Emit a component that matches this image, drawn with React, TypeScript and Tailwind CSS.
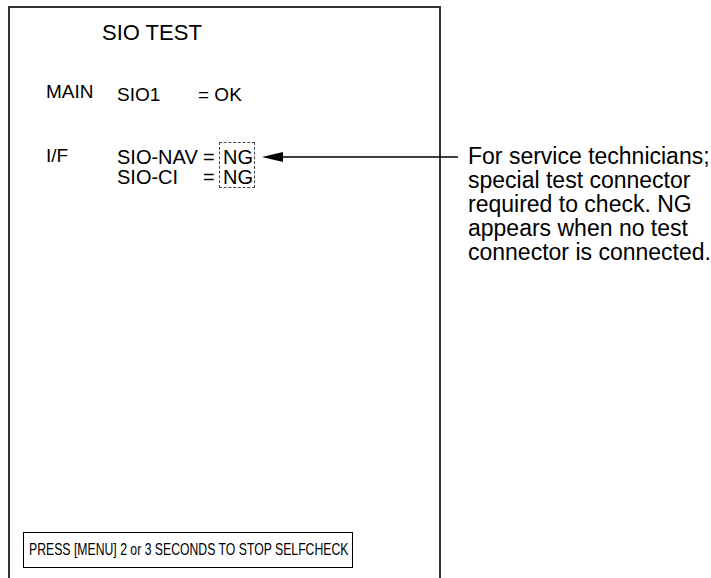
import React from 'react';

// SIO TEST self-check screen with callout note
const App = () => {
  return (
    <div className="relative w-[711px] h-[578px] overflow-hidden bg-white text-black font-['Liberation_Sans',Arial,sans-serif] flex items-start">
      {/* Screen panel */}
      <div className="ml-[8px] mt-[6px] w-[433px] h-[580px] shrink-0 border-2 border-b-0 border-[#333] flex flex-col">
        <div className="mt-[14px] pl-[92px] text-[22px] leading-none">SIO TEST</div>

        <div className="mt-[38px] flex items-start text-[19px] leading-none pl-[36px]">
          <div className="w-[71px]">MAIN</div>
          <div className="mt-[3px] w-[81px]">SIO1</div>
          <div className="mt-[3px]">= OK</div>
        </div>

        <div className="mt-[38px] flex items-start text-[19px] leading-none pl-[36px]">
          <div className="mt-[4px] w-[71px]">I/F</div>
          <div className="flex items-start">
            <div className="flex flex-col gap-[1px] pt-[5px] w-[86px] text-[20px]">
              <div className="h-[19px]">SIO-NAV</div>
              <div className="h-[19px]">SIO-CI</div>
            </div>
            <div className="flex flex-col gap-[1px] pt-[5px] w-[16px] text-[20px]">
              <div className="h-[19px]">=</div>
              <div className="h-[19px]">=</div>
            </div>
            <div className="w-[36px] h-[46px] border border-dashed border-[#444] flex flex-col gap-[1px] pt-[4px] pl-[3px] text-[20px]">
              <div className="h-[19px]">NG</div>
              <div className="h-[19px]">NG</div>
            </div>
          </div>
        </div>

        <div className="mt-auto mb-[18px] ml-[13px] w-[330px] h-[36px] border border-black flex items-center pl-[5px] overflow-hidden">
          <span className="inline-block origin-left scale-x-[0.72] whitespace-nowrap text-[17px] font-['Liberation_Sans',Arial,sans-serif]">
            PRESS [MENU] 2 or 3 SECONDS TO STOP SELFCHECK
          </span>
        </div>
      </div>

      {/* Callout note */}
      <div className="ml-[27px] mt-[144px] text-[23px] leading-[24px]">
        <div>For service technicians;</div>
        <div>special test connector</div>
        <div>required to check. NG</div>
        <div>appears when no test</div>
        <div>connector is connected.</div>
      </div>

      {/* Arrow pointing at the NG box */}
      <svg className="absolute left-[262px] top-[150px]" width="198" height="14" viewBox="0 0 198 14">
        <polygon points="0,7 21,2 21,12" fill="#000" />
        <line x1="20" y1="7" x2="196" y2="7" stroke="#000" strokeWidth="1.5" />
      </svg>
    </div>
  );
};

export default App;
